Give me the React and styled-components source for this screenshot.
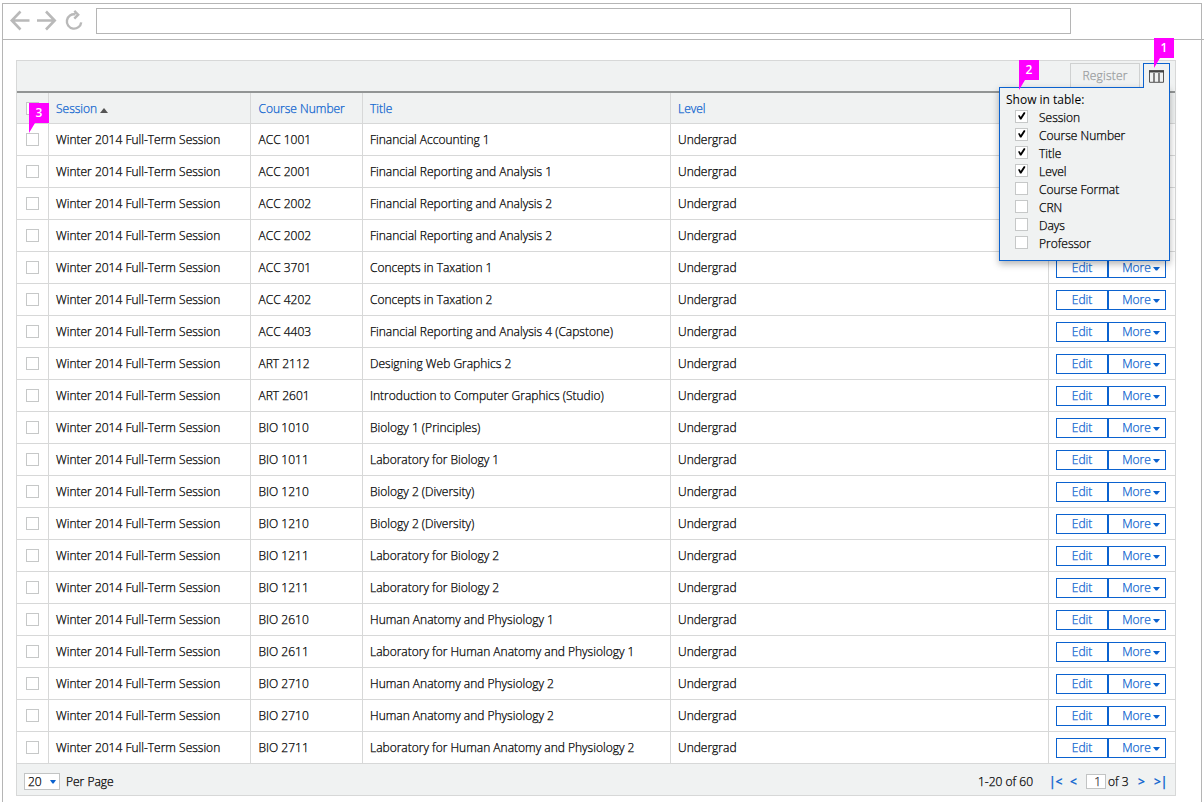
import React from "react";
import styled, { createGlobalStyle } from "styled-components";

const BLUE = "#0b62cf";
const LINE = "#d7d8d8";
const PANEL = "#f0f2f2";

const GlobalStyle = createGlobalStyle`
  * { box-sizing: border-box; }
  body { margin: 0; background: #fff; overflow: hidden; }
`;

const Page = styled.div`
  width: 1204px;
  height: 802px;
  padding: 3px 2px 0;
  overflow: hidden;
  font: 300 12px/16px "Open Sans", sans-serif;
  -webkit-text-stroke: 0.25px;
  color: #000;
`;

const Browser = styled.div`
  height: 799px;
  border: 1px solid #b5b5b5;
  border-bottom: 0;
`;

const BrowserBar = styled.header`
  display: flex;
  height: 36px;
  padding: 4px 0 0 7px;
  margin-right: -3px;
  border-bottom: 1px solid #b5b5b5;
`;

const NavIcons = styled.svg`
  flex: none;
  width: 86px;
  height: 28px;
  fill: none;
  stroke: #b9b9b9;
  stroke-width: 2.6;
`;

const Address = styled.div`
  width: 975px;
  height: 26px;
  border: 1px solid #b5b5b5;
`;

const Panel = styled.main`
  position: relative;
  width: 1160px;
  height: 736px;
  margin: 20px 0 0 13px;
  border: 1px solid ${LINE};
  background: ${PANEL};
`;

const Toolbar = styled.div`
  display: flex;
  justify-content: flex-end;
  gap: 3px;
  height: 32px;
  padding: 2px 5px 0 0;
  border-bottom: 2px solid #929595;
`;

const Register = styled.button`
  width: 70px;
  height: 25px;
  padding: 0;
  border: 1px solid #cfd1d1;
  background: ${PANEL};
  color: #999c9e;
  font: inherit;
  letter-spacing: 0.2px;
`;

const ColumnsTab = styled.button`
  display: flex;
  align-items: flex-start;
  position: relative;
  z-index: 3;
  width: 27px;
  height: 25px;
  padding: 6px 0 0 5px;
  border: 1px solid ${BLUE};
  border-bottom: 0;
  background: ${PANEL};
`;

const Row = styled.div`
  display: grid;
  grid-template-columns: 32px 202px 112px 308px 378px 126px;
  height: ${(p) => (p.$head ? "31px" : "32px")};
  border-bottom: 1px solid ${LINE};
  background: ${(p) => (p.$head ? PANEL : "#fff")};
  color: ${(p) => (p.$head ? BLUE : "inherit")};
`;

const Cell = styled.div`
  display: flex;
  align-items: center;
  padding: 1px 0 0 ${(p) => p.$indent || 7}px;
  border-right: 1px solid ${LINE};
  white-space: nowrap;
  &:last-child { border-right: 0; }
`;

const CheckCell = styled(Cell)`
  padding: 0 0 0 9px;
`;

const Box = styled.span`
  flex: none;
  width: 13px;
  height: 13px;
  border: 1px solid #c6c8c8;
  background: #fff;
  svg { display: block; }
`;

const SortArrow = styled.i`
  margin: 4px 0 0 3px;
  border: 4.5px solid transparent;
  border-top: 0;
  border-bottom: 5px solid #555;
`;

const Action = styled.button`
  display: flex;
  align-items: center;
  justify-content: center;
  gap: 2px;
  width: ${(p) => p.$width}px;
  height: 20px;
  padding: 0;
  border: 1px solid ${BLUE};
  background: #fff;
  color: ${BLUE};
  font: inherit;
  & + & { padding-left: 8px; }
`;

const Caret = styled.svg`
  flex: none;
  width: ${(p) => p.$width}px;
  height: 4px;
  margin-top: 1px;
  fill: ${BLUE};
`;

const Footer = styled.footer`
  display: flex;
  align-items: center;
  height: 31px;
  padding: 4px 9px 0 7px;
`;

const PageSize = styled.div`
  display: flex;
  align-items: center;
  justify-content: space-between;
  width: 36px;
  height: 17px;
  margin-right: 6px;
  padding: 0 3px;
  border: 1px solid #c2c4c4;
  background: #fff;
`;

const Range = styled.span`
  margin-left: auto;
  margin-right: 16px;
`;

const Pager = styled.span`
  width: ${(p) => p.$width}px;
  color: ${BLUE};
  font-weight: 600;
  white-space: nowrap;
`;

const PageInput = styled.span`
  width: 20px;
  height: 15px;
  margin-right: 2px;
  padding-right: 4px;
  border: 1px solid #c2c4c4;
  background: #fff;
  color: #333;
  line-height: 14px;
  text-align: right;
`;

const PageCount = styled.span`
  width: 30px;
`;

const Popup = styled.div`
  position: absolute;
  z-index: 2;
  top: 26px;
  left: 982px;
  width: 171px;
  height: 174px;
  padding: 4px 0 0 6px;
  border: 1px solid ${BLUE};
  background: ${PANEL};
  box-shadow: 0 3px 7px rgba(0, 0, 0, 0.3);
`;

const Option = styled.div`
  display: flex;
  gap: 11px;
  height: 18px;
  padding-left: 9px;
  line-height: 20px;
  ${Box} { margin-top: 2px; }
`;

const PopupTitle = styled.div`
  height: 16px;
  font-weight: 400;
  -webkit-text-stroke: 0;
`;

const Marker = styled.div`
  position: absolute;
  z-index: 4;
  top: ${(p) => p.$y}px;
  left: ${(p) => p.$x}px;
  width: 20px;
  height: 30px;
  background: #f0f;
  clip-path: polygon(0 0, 100% 0, 100% 20px, 6px 20px, 0 100%);
  color: #fff;
  font-weight: 600;
  -webkit-text-stroke: 0;
  line-height: 20px;
  text-align: center;
`;

const courses = [
  ["ACC 1001", "Financial Accounting 1"],
  ["ACC 2001", "Financial Reporting and Analysis 1"],
  ["ACC 2002", "Financial Reporting and Analysis 2"],
  ["ACC 2002", "Financial Reporting and Analysis 2"],
  ["ACC 3701", "Concepts in Taxation 1"],
  ["ACC 4202", "Concepts in Taxation 2"],
  ["ACC 4403", "Financial Reporting and Analysis 4 (Capstone)"],
  ["ART 2112", "Designing Web Graphics 2"],
  ["ART 2601", "Introduction to Computer Graphics (Studio)"],
  ["BIO 1010", "Biology 1 (Principles)"],
  ["BIO 1011", "Laboratory for Biology 1"],
  ["BIO 1210", "Biology 2 (Diversity)"],
  ["BIO 1210", "Biology 2 (Diversity)"],
  ["BIO 1211", "Laboratory for Biology 2"],
  ["BIO 1211", "Laboratory for Biology 2"],
  ["BIO 2610", "Human Anatomy and Physiology 1"],
  ["BIO 2611", "Laboratory for Human Anatomy and Physiology 1"],
  ["BIO 2710", "Human Anatomy and Physiology 2"],
  ["BIO 2710", "Human Anatomy and Physiology 2"],
  ["BIO 2711", "Laboratory for Human Anatomy and Physiology 2"],
];

// Rows that lie wholly behind the open column menu show no actions.
const ROWS_BEHIND_MENU = 4;

const options = [
  ["Session", true],
  ["Course Number", true],
  ["Title", true],
  ["Level", true],
  ["Course Format", false],
  ["CRN", false],
  ["Days", false],
  ["Professor", false],
];

function CheckBox({ checked }) {
  return (
    <Box>
      {checked && (
        <svg width="11" height="11" viewBox="0 0 11 11">
          <path d="M2 4.6 3.8 4.3 4.7 5.9 7.8 1.3 9.2 1.3 9.2 2.6 5.4 8.4 4 8.4Z" fill="#000" />
        </svg>
      )}
    </Box>
  );
}

function DownCaret({ width = 7 }) {
  return (
    <Caret $width={width} viewBox="0 0 7 4" preserveAspectRatio="none">
      <path d="M0 0H7L4.2 3.5H2.8Z" />
    </Caret>
  );
}

export default function App() {
  return (
    <Page>
      <GlobalStyle />
      <Browser>
        <BrowserBar>
          <NavIcons viewBox="0 0 86 28">
            <path d="M10.5 3.5 1.8 12.5 10.5 21.5M2 12.5H19.5M36 3.5 44.7 12.5 36 21.5M44.5 12.5H27" />
            <path d="M65.5 6.4A7.2 7.2 0 1 0 71.2 14.3M64.3 2.8 68.2 6.7 64.3 10.6" strokeWidth="2.4" />
          </NavIcons>
          <Address />
        </BrowserBar>
        <Panel>
          <Toolbar>
            <Register>Register</Register>
            <ColumnsTab>
              <svg width="15" height="13" viewBox="0 0 15 13" fill="none">
                <path d="M5 3V12M10 3V12" stroke="#777" strokeWidth="1.8" />
                <path d="M0.5 1.5H14.5V12.3H0.5Z" stroke="#555" />
                <path d="M0 1.3H15" stroke="#444" strokeWidth="2.4" />
              </svg>
            </ColumnsTab>
          </Toolbar>
          <Row $head>
            <CheckCell><CheckBox /></CheckCell>
            <Cell>Session<SortArrow /></Cell>
            <Cell $indent={7.5}>Course Number</Cell>
            <Cell>Title</Cell>
            <Cell>Level</Cell>
            <Cell />
          </Row>
          {courses.map(([number, title], i) => (
            <Row key={i}>
              <CheckCell><CheckBox /></CheckCell>
              <Cell>Winter 2014 Full-Term Session</Cell>
              <Cell $indent={7.5}>{number}</Cell>
              <Cell>{title}</Cell>
              <Cell>Undergrad</Cell>
              <Cell>
                {i >= ROWS_BEHIND_MENU && (
                  <>
                    <Action $width={52}>Edit</Action>
                    <Action $width={58}>More<DownCaret /></Action>
                  </>
                )}
              </Cell>
            </Row>
          ))}
          <Footer>
            <PageSize>20<DownCaret width={6} /></PageSize>
            Per Page
            <Range>1-20 of 60</Range>
            <Pager $width={21}>|&lt;</Pager>
            <Pager $width={16}>&lt;</Pager>
            <PageInput>1</PageInput>
            <PageCount>of 3</PageCount>
            <Pager $width={16}>&gt;</Pager>
            <Pager $width={12}>&gt;|</Pager>
          </Footer>
          <Popup>
            <PopupTitle>Show in table:</PopupTitle>
            {options.map(([label, checked]) => (
              <Option key={label}><CheckBox checked={checked} />{label}</Option>
            ))}
          </Popup>
          <Marker $x={1137} $y={-23}>1</Marker>
          <Marker $x={1002} $y={-1}>2</Marker>
          <Marker $x={12} $y={42}>3</Marker>
        </Panel>
      </Browser>
    </Page>
  );
}
